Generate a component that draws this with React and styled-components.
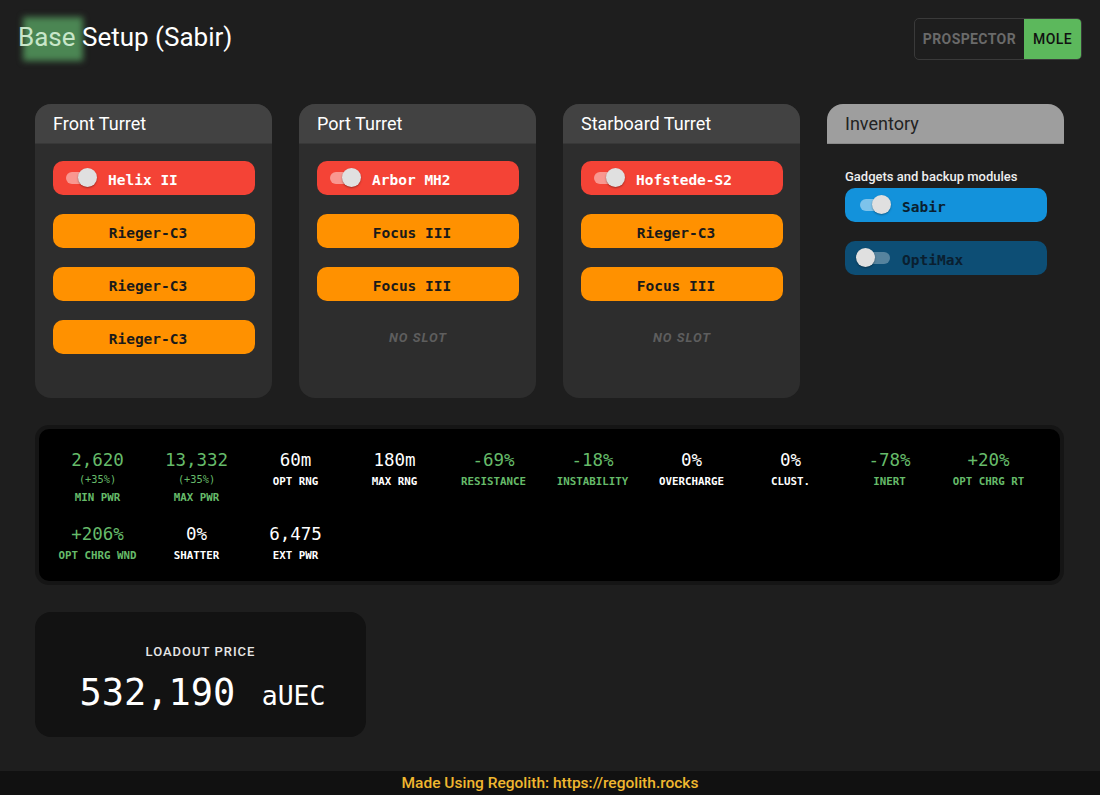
import React from 'react';
import styled, { createGlobalStyle } from 'styled-components';

const MONO = "'DejaVu Sans Mono', 'Liberation Mono', monospace";

const GlobalStyle = createGlobalStyle`
  html, body {
    margin: 0;
    padding: 0;
    background: #1e1e1e;
    font-family: Roboto, 'Noto Sans', sans-serif;
    color: #fff;
  }
`;

const turrets = [
  {
    name: 'Front Turret',
    laser: 'Helix II',
    modules: ['Rieger-C3', 'Rieger-C3', 'Rieger-C3'],
  },
  { name: 'Port Turret', laser: 'Arbor MH2', modules: ['Focus III', 'Focus III', null] },
  { name: 'Starboard Turret', laser: 'Hofstede-S2', modules: ['Rieger-C3', 'Focus III', null] },
];

const stats = [
  { value: '2,620', sub: '(+35%)', label: 'MIN PWR', good: true },
  { value: '13,332', sub: '(+35%)', label: 'MAX PWR', good: true },
  { value: '60m', label: 'OPT RNG' },
  { value: '180m', label: 'MAX RNG' },
  { value: '-69%', label: 'RESISTANCE', good: true },
  { value: '-18%', label: 'INSTABILITY', good: true },
  { value: '0%', label: 'OVERCHARGE' },
  { value: '0%', label: 'CLUST.' },
  { value: '-78%', label: 'INERT', good: true },
  { value: '+20%', label: 'OPT CHRG RT', good: true },
  { value: '+206%', label: 'OPT CHRG WND', good: true },
  { value: '0%', label: 'SHATTER' },
  { value: '6,475', label: 'EXT PWR' },
];

const App = () => {
  return (
    <>
      <GlobalStyle />
      <Page>
        <Header>
          <Title>
            <Glow>Base</Glow> Setup (Sabir)
          </Title>
          <ShipToggle>
            <ShipOption>PROSPECTOR</ShipOption>
            <ShipOption active>MOLE</ShipOption>
          </ShipToggle>
        </Header>

        <Cards>
          {turrets.map((t) => (
            <Card key={t.name}>
              <CardHead>{t.name}</CardHead>
              <CardBody>
                <Slot kind='laser'>
                  <Switch on />
                  <SlotText>{t.laser}</SlotText>
                </Slot>
                {t.modules.map((m, i) =>
                  m ? (
                    <Slot key={i} kind='module' center>
                      <SlotText>{m}</SlotText>
                    </Slot>
                  ) : (
                    <NoSlot key={i}>NO SLOT</NoSlot>
                  )
                )}
              </CardBody>
            </Card>
          ))}
          <Card plain>
            <CardHead light>Inventory</CardHead>
            <CardBody>
              <InvLabel>Gadgets and backup modules</InvLabel>
              <InvSlot>
                <Switch on />
                <SlotText>Sabir</SlotText>
              </InvSlot>
              <InvSlot off>
                <Switch />
                <SlotText>OptiMax</SlotText>
              </InvSlot>
            </CardBody>
          </Card>
        </Cards>

        <StatsBox>
          {stats.map((s) => (
            <Stat key={s.label}>
              <StatValue good={s.good}>{s.value}</StatValue>
              {s.sub && <StatSub good={s.good}>{s.sub}</StatSub>}
              <StatLabel good={s.good}>{s.label}</StatLabel>
            </Stat>
          ))}
        </StatsBox>

        <PriceBox>
          <PriceLabel>LOADOUT PRICE</PriceLabel>
          <PriceValue>
            532,190 <PriceUnit>aUEC</PriceUnit>
          </PriceValue>
        </PriceBox>
      </Page>
      <Footer>Made Using Regolith: https://regolith.rocks</Footer>
    </>
  );
};

const Switch = ({ on }) => (
  <Track on={on}>
    <Knob on={on} />
  </Track>
);

const Page = styled.div`
  height: 771px;
  box-sizing: border-box;
  padding: 18px 18px 0;
  overflow: hidden;
`;

const Header = styled.div`
  display: flex;
  justify-content: space-between;
  align-items: flex-start;
`;

const Title = styled.h1`
  margin: 3px 0 0;
  font-size: 26px;
  font-weight: 400;
  line-height: 32px;
  color: #fff;
  position: relative;
  isolation: isolate;
`;

const Glow = styled.span`
  display: inline-block;
  position: relative;
  color: #c8e6c9;
  &::before {
    content: '';
    position: absolute;
    left: 5px;
    top: -4px;
    width: 60px;
    height: 44px;
    background: #4b8653;
    filter: blur(3px);
    z-index: -1;
  }
`;

const ShipToggle = styled.div`
  display: flex;
  border: 1px solid #3a3a3a;
  border-radius: 5px;
  overflow: hidden;
  height: 40px;
`;

const ShipOption = styled.div`
  display: flex;
  align-items: center;
  font-size: 14px;
  letter-spacing: 0.4px;
  color: ${(props) => (props.active ? '#111' : '#6a6a6a')};
  background: ${(props) => (props.active ? '#5cb85c' : 'transparent')};
  font-weight: ${(props) => (props.active ? 500 : 700)};
  padding: ${(props) => (props.active ? '0 9px' : '0 8px')};
`;

const Cards = styled.div`
  display: grid;
  grid-template-columns: repeat(4, 237px);
  gap: 27px;
  margin: 44px 0 0 17px;
`;

const Card = styled.div`
  background: ${(props) => (props.plain ? 'transparent' : '#2d2d2d')};
  border-radius: 16px;
  height: 294px;
  overflow: hidden;
`;

const CardHead = styled.div`
  height: 39px;
  display: flex;
  align-items: center;
  padding: 0 18px;
  font-size: 18px;
  background: ${(props) => (props.light ? '#9e9e9e' : '#424242')};
  color: ${(props) => (props.light ? '#222' : '#fff')};
  border-bottom: 1px solid ${(props) => (props.light ? '#8a8a8a' : '#383838')};
`;

const CardBody = styled.div`
  display: flex;
  flex-direction: column;
  gap: 19px;
  padding: 17px 17px 0 18px;
`;

const Slot = styled.div`
  height: 34px;
  border-radius: 10px;
  display: flex;
  align-items: center;
  justify-content: ${(props) => (props.center ? 'center' : 'flex-start')};
  padding: 4px ${(props) => (props.center ? '25px' : '13px')} 0 13px;
  box-sizing: border-box;
  background: ${(props) => (props.kind === 'laser' ? '#f44336' : '#ff9100')};
  color: ${(props) => (props.kind === 'laser' ? '#fff' : '#1a1a1a')};
  font-weight: ${(props) => (props.kind === 'laser' ? 700 : 600)};
  gap: 12px;
`;

const SlotText = styled.span`
  font-family: ${MONO};
  font-size: 14.5px;
  line-height: 18px;
`;

const NoSlot = styled.div`
  height: 34px;
  display: flex;
  align-items: center;
  justify-content: center;
  font-size: 13px;
  font-style: italic;
  font-weight: 700;
  letter-spacing: 1px;
  color: #5e5e5e;
`;

const Track = styled.div`
  position: relative;
  width: 30px;
  height: 12px;
  margin-top: -4px;
  border-radius: 6px;
  background: ${(props) => (props.on ? 'rgba(255,255,255,0.45)' : 'rgba(255,255,255,0.3)')};
  flex-shrink: 0;
`;

const Knob = styled.div`
  position: absolute;
  top: -4px;
  left: ${(props) => (props.on ? '12px' : '-4px')};
  width: 19px;
  height: 19px;
  border-radius: 50%;
  background: #e0e0e0;
  box-shadow: 0 1px 2px rgba(0, 0, 0, 0.35);
`;

const InvLabel = styled.div`
  font-size: 13px;
  font-weight: 500;
  color: #eee;
  margin: 8px 0 -15px;
`;

const InvSlot = styled.div`
  height: 34px;
  border-radius: 10px;
  display: flex;
  align-items: center;
  gap: 12px;
  padding: 4px 13px 0 15px;
  box-sizing: border-box;
  background: ${(props) => (props.off ? '#0d4e75' : '#1392db')};
  color: #0a1f30;
  font-weight: 600;
`;

const StatsBox = styled.div`
  margin: 27px 18px 0 17px;
  background: #000;
  border: 4px solid #151515;
  border-radius: 14px;
  display: grid;
  grid-template-columns: repeat(10, 99px);
  row-gap: 17px;
  padding: 20px 0 17px 9px;
`;

const Stat = styled.div`
  display: flex;
  flex-direction: column;
  align-items: center;
`;

const StatValue = styled.div`
  font-family: ${MONO};
  font-size: 17.5px;
  line-height: 22px;
  color: ${(props) => (props.good ? '#66bb6a' : '#fff')};
`;

const StatSub = styled.div`
  font-family: ${MONO};
  font-size: 10.3px;
  line-height: 16px;
  color: ${(props) => (props.good ? '#66bb6a' : '#fff')};
`;

const StatLabel = styled.div`
  font-family: ${MONO};
  font-size: 10.8px;
  font-weight: 700;
  line-height: 16px;
  margin-top: 3px;
  color: ${(props) => (props.good ? '#66bb6a' : '#fff')};
`;

const PriceBox = styled.div`
  margin: 27px 0 0 17px;
  width: 331px;
  height: 125px;
  box-sizing: border-box;
  background: #121212;
  border-radius: 16px;
  display: flex;
  flex-direction: column;
  align-items: center;
  justify-content: center;
  gap: 12px;
  padding-top: 8px;
`;

const PriceLabel = styled.div`
  font-size: 13px;
  font-weight: 500;
  letter-spacing: 1px;
  color: #e6e6e6;
`;

const PriceValue = styled.div`
  font-family: ${MONO};
  font-size: 37px;
  color: #fff;
  margin-left: 4px;
`;

const PriceUnit = styled.span`
  font-size: 26.5px;
  margin-left: 4px;
`;

const Footer = styled.div`
  height: 24px;
  background: #111;
  display: flex;
  align-items: center;
  justify-content: center;
  font-size: 15.5px;
  font-weight: 500;
  color: #f0b72f;
`;

export default App;
